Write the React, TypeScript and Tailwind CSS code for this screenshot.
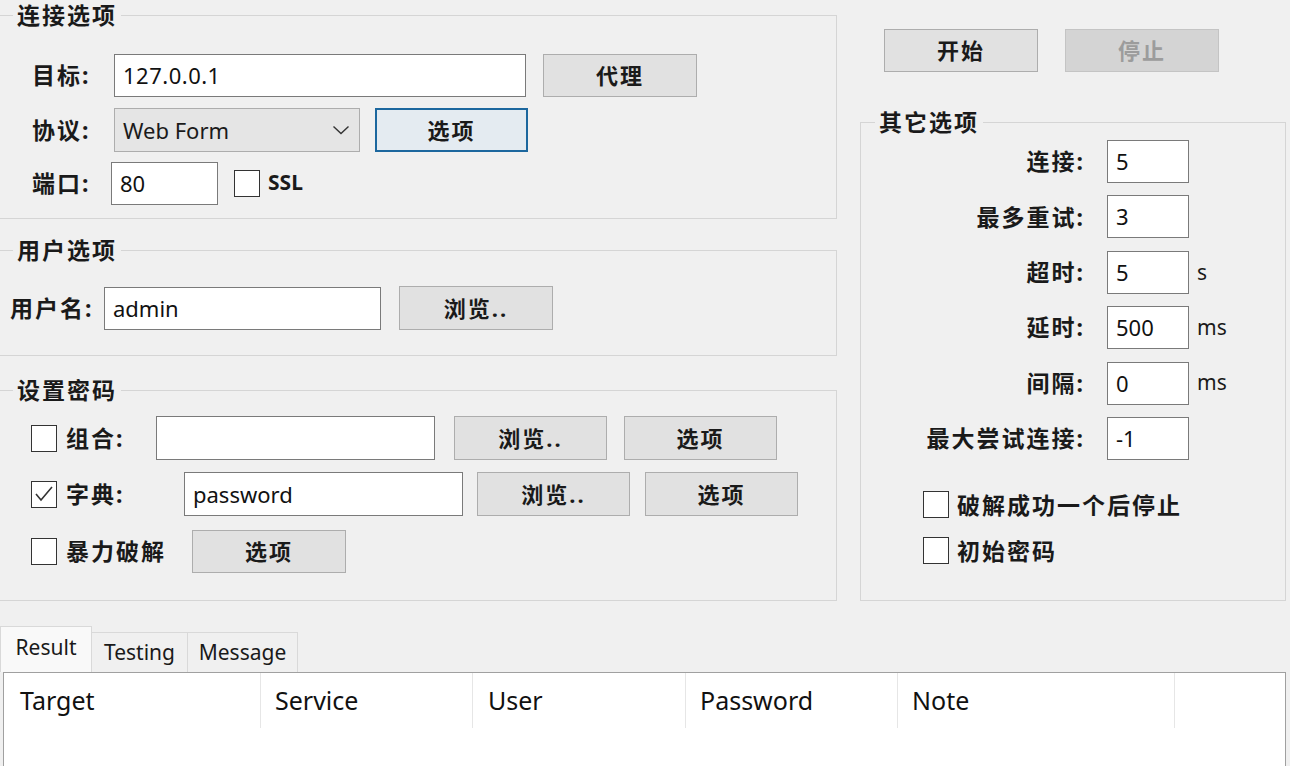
import React from "react";

const CJK = "text-[23px] tracking-[2px] font-bold";

function Btn({ children, className = "" }: { children: React.ReactNode; className?: string }) {
  return (
    <div
      className={`flex shrink-0 items-center justify-center bg-[#e1e1e1] border border-[#adadad] text-[22px] tracking-[2px] font-bold text-[#1a1a1a] ${className}`}
    >
      {children}
    </div>
  );
}

function Input({ value = "", className = "" }: { value?: string; className?: string }) {
  return (
    <div className={`flex shrink-0 items-center bg-white border border-[#7a7a7a] pl-[8px] text-[22px] text-[#111] ${className}`}>
      {value}
    </div>
  );
}

function Check({ checked = false }: { checked?: boolean }) {
  return (
    <div className="w-[26px] h-[27px] shrink-0 border-[1.5px] border-[#333] bg-white flex items-center justify-center">
      {checked && (
        <svg width="22" height="22" viewBox="0 0 22 22">
          <polyline points="3,11 8,17 19,4" fill="none" stroke="#333" strokeWidth="1.6" />
        </svg>
      )}
    </div>
  );
}

export default function App() {
  return (
    <div className="w-[1290px] h-[766px] overflow-hidden bg-[#f0f0f0] text-[#1a1a1a] font-['Noto_Sans','Noto_Sans_CJK_SC',sans-serif]">
      <div className="flex h-[601px]">
        {/* Left column */}
        <div className="w-[837px] shrink-0 flex flex-col">
          {/* 连接选项 */}
          <fieldset className="-ml-[2px] w-[839px] h-[219px] border border-[#d5d5d5]">
            <legend className={`ml-[14px] px-[4px] leading-[30px] ${CJK}`}>连接选项</legend>
            <div className="flex flex-col pl-[33px] pt-[23px]">
              <div className="flex items-center h-[44px]">
                <div className={`w-[82px] shrink-0 ${CJK}`}>目标:</div>
                <Input value="127.0.0.1" className="w-[412px] h-[43px] tracking-[0.5px]" />
                <Btn className="ml-[17px] w-[154px] h-[43px]">代理</Btn>
              </div>
              <div className="flex items-center h-[44px] mt-[11px]">
                <div className={`w-[82px] shrink-0 ${CJK}`}>协议:</div>
                <div className="flex w-[246px] h-[44px] shrink-0 items-center justify-between bg-[#e5e5e5] border border-[#adadad] pl-[8px] pr-[9px] text-[22px]">
                  <span>Web Form</span>
                  <svg width="18" height="10" viewBox="0 0 18 10">
                    <polyline points="1.5,1.5 9,8.5 16.5,1.5" fill="none" stroke="#333" strokeWidth="1.4" />
                  </svg>
                </div>
                <Btn className="ml-[15px] w-[153px] h-[44px] !border-2 !border-[#1c679e] !bg-[#e4ebf1]">选项</Btn>
              </div>
              <div className="flex items-center h-[44px] mt-[9px]">
                <div className={`w-[79px] shrink-0 ${CJK}`}>端口:</div>
                <Input value="80" className="w-[107px] h-[43px]" />
                <div className="ml-[16px]">
                  <Check />
                </div>
                <div className="ml-[8px] text-[21px] font-bold">SSL</div>
              </div>
            </div>
          </fieldset>

          {/* 用户选项 */}
          <fieldset className="-ml-[2px] mt-[16px] w-[839px] h-[121px] border border-[#d5d5d5]">
            <legend className={`ml-[14px] px-[4px] leading-[30px] ${CJK}`}>用户选项</legend>
            <div className="flex items-center h-[44px] mt-[21px] pl-[11px]">
              <div className={`w-[94px] shrink-0 ${CJK}`}>用户名:</div>
              <Input value="admin" className="w-[277px] h-[43px]" />
              <Btn className="ml-[18px] w-[154px] h-[44px]">浏览..</Btn>
            </div>
          </fieldset>

          {/* 设置密码 */}
          <fieldset className="-ml-[2px] mt-[19px] w-[839px] h-[226px] border border-[#d5d5d5]">
            <legend className={`ml-[14px] px-[4px] leading-[30px] ${CJK}`}>设置密码</legend>
            <div className="flex flex-col pl-[32px]">
              <div className="flex items-center h-[44px] mt-[11px]">
                <Check />
                <div className={`ml-[9px] w-[90px] shrink-0 ${CJK}`}>组合:</div>
                <Input className="w-[279px] h-[44px]" />
                <Btn className="ml-[19px] w-[153px] h-[44px]">浏览..</Btn>
                <Btn className="ml-[17px] w-[153px] h-[44px]">选项</Btn>
              </div>
              <div className="flex items-center h-[44px] mt-[12px]">
                <Check checked />
                <div className={`ml-[9px] w-[118px] shrink-0 ${CJK}`}>字典:</div>
                <Input value="password" className="w-[279px] h-[44px]" />
                <Btn className="ml-[14px] w-[153px] h-[44px]">浏览..</Btn>
                <Btn className="ml-[15px] w-[153px] h-[44px]">选项</Btn>
              </div>
              <div className="flex items-center h-[43px] mt-[14px]">
                <Check />
                <div className={`ml-[9px] w-[126px] shrink-0 ${CJK}`}>暴力破解</div>
                <Btn className="w-[154px] h-[43px]">选项</Btn>
              </div>
            </div>
          </fieldset>
        </div>

        {/* Right column */}
        <div className="flex-1 flex flex-col">
          <div className="flex pt-[29px] pl-[47px]">
            <Btn className="w-[154px] h-[43px]">开始</Btn>
            <Btn className="ml-[27px] w-[154px] h-[43px] !bg-[#d4d4d4] !border-[#c4c4c4] !text-[#9c9c9c]">停止</Btn>
          </div>
          <fieldset className="mt-[35px] ml-[23px] w-[426px] h-[494px] border border-[#d5d5d5]">
            <legend className={`ml-[14px] px-[4px] leading-[30px] ${CJK}`}>其它选项</legend>
            <div className="flex flex-col gap-[12.4px] mt-[3px]">
              {[
                ["连接:", "5", ""],
                ["最多重试:", "3", ""],
                ["超时:", "5", "s"],
                ["延时:", "500", "ms"],
                ["间隔:", "0", "ms"],
                ["最大尝试连接:", "-1", ""],
              ].map(([label, val, unit]) => (
                <div key={label} className="flex items-center h-[43px]">
                  <div className={`w-[224px] shrink-0 text-right ${CJK}`}>{label}</div>
                  <Input value={val} className="ml-[22px] w-[82px] h-[43px]" />
                  <div className="ml-[8px] text-[21px]">{unit}</div>
                </div>
              ))}
            </div>
            <div className="flex items-center h-[30px] mt-[30px] pl-[62px]">
              <Check />
              <div className={`ml-[8px] ${CJK}`}>破解成功一个后停止</div>
            </div>
            <div className="flex items-center h-[30px] mt-[16px] pl-[62px]">
              <Check />
              <div className={`ml-[8px] ${CJK}`}>初始密码</div>
            </div>
          </fieldset>
        </div>
      </div>

      {/* Tabs */}
      <div className="flex items-end h-[46px] mt-[25px] text-[21px]">
        <div className="w-[92px] h-[46px] flex items-center justify-center bg-[#f9f9f9] border-t border-l border-r border-[#d9d9d9] pb-[4px]">
          Result
        </div>
        <div className="w-[96px] h-[40px] flex items-center justify-center border-t border-r border-[#d9d9d9]">
          Testing
        </div>
        <div className="w-[110px] h-[40px] flex items-center justify-center border-t border-r border-[#d9d9d9]">
          Message
        </div>
      </div>
      <div className="ml-[3px] w-[1283px] h-[120px] bg-white border border-[#a0a0a0]">
        <div className="flex h-[55px] text-[25px] text-[#111]">
          <div className="w-[257px] flex items-center pl-[16px] border-r border-[#e6e6e6]">Target</div>
          <div className="w-[212px] flex items-center pl-[14px] border-r border-[#e6e6e6]">Service</div>
          <div className="w-[213px] flex items-center pl-[15px] border-r border-[#e6e6e6]">User</div>
          <div className="w-[212px] flex items-center pl-[14px] border-r border-[#e6e6e6]">Password</div>
          <div className="w-[277px] flex items-center pl-[14px] border-r border-[#e6e6e6]">Note</div>
          <div className="flex-1" />
        </div>
      </div>
    </div>
  );
}
